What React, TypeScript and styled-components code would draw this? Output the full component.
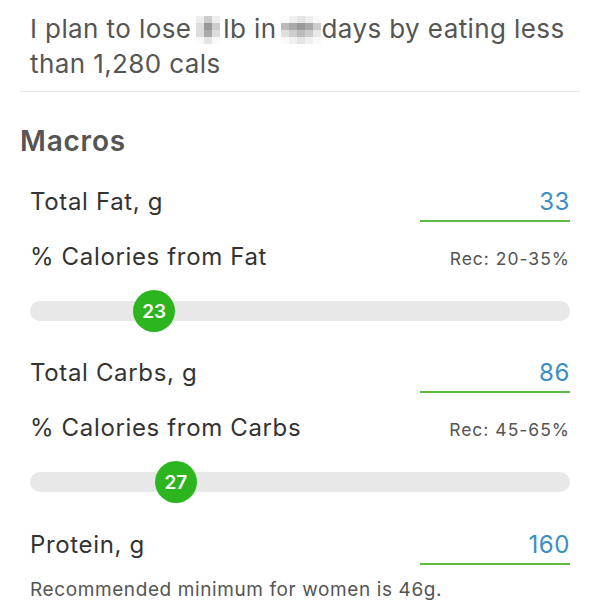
import React from 'react';
import styled, { createGlobalStyle } from 'styled-components';

const GlobalStyle = createGlobalStyle`
  html, body {
    margin: 0;
    padding: 0;
    background: #fff;
    font-family: Inter, "Liberation Sans", Arial, sans-serif;
  }
`;

const Page = styled.div`
  width: 600px;
  height: 600px;
  overflow: hidden;
  background: #fff;
`;

const Plan = styled.p`
  margin: 0;
  padding: 11px 10px 0 30px;
  font-size: 26px;
  letter-spacing: 0.4px;
  line-height: 35px;
  color: #555;
`;

const Mosaic = styled.span<{ $cols: number; $ml: number; $mr: number }>`
  display: inline-block;
  width: ${(p) => p.$cols * 8}px;
  height: 28px;
  margin: 0 ${(p) => p.$mr}px 0 ${(p) => p.$ml}px;
  vertical-align: -6px;
`;

const Cell = styled.span<{ $shade: string }>`
  display: block;
  float: left;
  width: 8px;
  height: 7px;
  background: ${(p) => p.$shade};
`;

const Divider = styled.hr`
  margin: 10px 20px 0 20px;
  border: none;
  border-top: 1px solid #e6e6e6;
`;

const SectionTitle = styled.h2`
  margin: 0;
  padding: 33px 20px 0 20px;
  font-size: 28px;
  letter-spacing: 0.8px;
  line-height: 32px;
  font-weight: 600;
  color: #555;
`;

const Body = styled.div`
  padding: 0 30px;
  display: flex;
  flex-direction: column;
`;

const FieldRow = styled.div<{ $top: number }>`
  display: flex;
  align-items: baseline;
  justify-content: space-between;
  margin-top: ${(p) => p.$top}px;
`;

const Label = styled.span`
  font-size: 24px;
  letter-spacing: 0.65px;
  line-height: 30px;
  color: #333;
`;

const ValueInput = styled.div`
  width: 150px;
  text-align: right;
  font-size: 24px;
  letter-spacing: 0.6px;
  line-height: 30px;
  color: #3a8ec4;
  border-bottom: 2px solid #5cbb3e;
  padding-bottom: 3px;
`;

const Rec = styled.span`
  font-size: 17.5px;
  letter-spacing: 1px;
  line-height: 24px;
  color: #555;
`;

const Track = styled.div`
  position: relative;
  height: 20px;
  border-radius: 10px;
  background: #e8e8e8;
  margin-top: 29px;
`;

const Thumb = styled.div`
  position: absolute;
  top: 50%;
  width: 42px;
  height: 42px;
  margin-left: -21px;
  margin-top: -21px;
  border-radius: 50%;
  background: #2cb51f;
  color: #fff;
  font-size: 19px;
  font-weight: 600;
  display: flex;
  align-items: center;
  justify-content: center;
`;

const Note = styled.p`
  margin: 13px 0 0 0;
  font-size: 19px;
  letter-spacing: 0.6px;
  line-height: 24px;
  color: #555;
`;

const blurA = ['#eee', '#ccc', '#eee', '#ddd', '#999', '#ccc', '#ddd', '#aaa', '#ddd', '#fafafa', '#e4e4e4', '#fafafa'];
const blurB = [
  '#fafafa', '#eee', '#e4e4e4', '#eee', '#fafafa',
  '#bbb', '#aaa', '#999', '#aaa', '#ccc',
  '#e0e0e0', '#ccc', '#bbb', '#ccc', '#e8e8e8',
  '#fafafa', '#f0f0f0', '#e4e4e4', '#f0f0f0', '#fafafa',
];

const Blur: React.FC<{ cols: number; shades: string[]; ml: number; mr: number }> = ({ cols, shades, ml, mr }) => (
  <Mosaic $cols={cols} $ml={ml} $mr={mr}>
    {shades.map((s, i) => (
      <Cell key={i} $shade={s} />
    ))}
  </Mosaic>
);

const Slider: React.FC<{ value: number }> = ({ value }) => (
  <Track>
    <Thumb style={{ left: `${value}%` }}>{value}</Thumb>
  </Track>
);

export default function App() {
  return (
    <Page>
      <GlobalStyle />
      <Plan>
        I plan to lose<Blur cols={3} shades={blurA} ml={5} mr={3} />lb in<Blur cols={5} shades={blurB} ml={4} mr={1} />days by eating less
        than 1,280 cals
      </Plan>
      <Divider />
      <SectionTitle>Macros</SectionTitle>
      <Body>
        <FieldRow $top={30}>
          <Label>Total Fat, g</Label>
          <ValueInput>33</ValueInput>
        </FieldRow>
        <FieldRow $top={20}>
          <Label>% Calories from Fat</Label>
          <Rec>Rec: 20-35%</Rec>
        </FieldRow>
        <Slider value={23} />
        <FieldRow $top={37}>
          <Label>Total Carbs, g</Label>
          <ValueInput>86</ValueInput>
        </FieldRow>
        <FieldRow $top={20}>
          <Label>% Calories from Carbs</Label>
          <Rec>Rec: 45-65%</Rec>
        </FieldRow>
        <Slider value={27} />
        <FieldRow $top={38}>
          <Label>Protein, g</Label>
          <ValueInput>160</ValueInput>
        </FieldRow>
        <Note>Recommended minimum for women is 46g.</Note>
      </Body>
    </Page>
  );
}
